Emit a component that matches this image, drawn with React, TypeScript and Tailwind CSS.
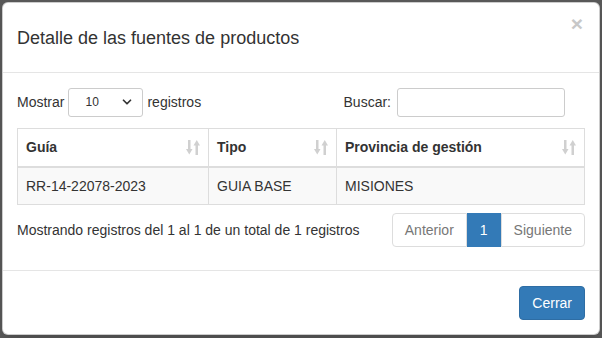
import { ChevronDown } from "lucide-react"

const font = { fontFamily: '"Liberation Sans", Arial, sans-serif' }

const SortIcon = () => (
  <svg width="14" height="15" viewBox="0 0 14 15" className="shrink-0">
    <g fill="#d0d0d0">
      <rect x="2" y="0" width="2.5" height="10" />
      <path d="M0 9 L6.5 9 L3.25 14.5 Z" />
      <rect x="9.5" y="4.5" width="2.5" height="10.5" />
      <path d="M7.5 5.5 L14 5.5 L10.75 0 Z" />
    </g>
  </svg>
)

const columns = ["Guía", "Tipo", "Provincia de gestión"]
const rows = [["RR-14-22078-2023", "GUIA BASE", "MISIONES"]]
const widths = ["w-[191px]", "w-[128px]", "flex-1"]

export default function App() {
  return (
    <div className="h-[338px] w-[602px] bg-[#585858] p-[2px] pb-[3px] text-[14px] text-[#333]" style={font}>
      <div className="flex h-full w-full flex-col rounded-[6px] border border-black/20 bg-white shadow-lg">
        {/* header */}
        <div className="relative flex h-[70px] items-center border-b border-[#e5e5e5] px-[14px]">
          <h4 className="text-[18px] leading-[26px] text-[#333]">Detalle de las fuentes de productos</h4>
          <button className="absolute right-[16px] top-[10px] text-[21px] font-bold leading-none text-[#c8c8c8]">×</button>
        </div>

        {/* body */}
        <div className="flex h-[197px] flex-col px-[14px] pt-[14px]">
          <div className="flex h-[30px] items-center justify-between pr-[18px]">
            <div className="flex items-center gap-[4px]">
              <span>Mostrar</span>
              <div className="flex h-[29px] w-[75px] items-center justify-between rounded-[3px] border border-[#ccc] pl-[16px] pr-[8px] text-[12px]">
                <span>10</span>
                <ChevronDown size={14} strokeWidth={3} className="text-[#333]" />
              </div>
              <span>registros</span>
            </div>
            <div className="mr-[2px] flex items-center gap-[6px]">
              <span>Buscar:</span>
              <div className="h-[29px] w-[168px] rounded-[3px] border border-[#ccc]" />
            </div>
          </div>

          <div className="mt-[11px] border border-[#ddd]">
            <div className="flex h-[39px] border-b-2 border-[#ddd] font-bold">
              {columns.map((c, i) => (
                <div
                  key={c}
                  className={`${widths[i]} flex items-center justify-between px-[8px] ${i < 2 ? "border-r border-[#ddd]" : ""}`}
                >
                  <span>{c}</span>
                  <SortIcon />
                </div>
              ))}
            </div>
            {rows.map((r) => (
              <div key={r[0]} className="flex h-[36px] bg-[#f9f9f9]">
                {r.map((v, i) => (
                  <div
                    key={v}
                    className={`${widths[i]} flex items-center px-[8px] ${i < 2 ? "border-r border-[#ddd]" : ""}`}
                  >
                    {v}
                  </div>
                ))}
              </div>
            ))}
          </div>

          <div className="mt-[8px] flex items-start justify-between">
            <span className="mt-[7px]">Mostrando registros del 1 al 1 de un total de 1 registros</span>
            <div className="flex h-[34px] text-[14px]">
              <span className="flex items-center rounded-l-[4px] border border-[#ddd] px-[12px] text-[#777]">Anterior</span>
              <span className="flex items-center border border-[#337ab7] bg-[#337ab7] px-[12px] text-white">1</span>
              <span className="flex items-center rounded-r-[4px] border border-[#ddd] px-[12px] text-[#777]">Siguiente</span>
            </div>
          </div>
        </div>

        {/* footer */}
        <div className="flex flex-1 items-start justify-end border-t border-[#e5e5e5] px-[14px] pt-[15px]">
          <button className="h-[34px] rounded-[4px] border border-[#2e6da4] bg-[#337ab7] px-[12px] text-white">Cerrar</button>
        </div>
      </div>
    </div>
  )
}
